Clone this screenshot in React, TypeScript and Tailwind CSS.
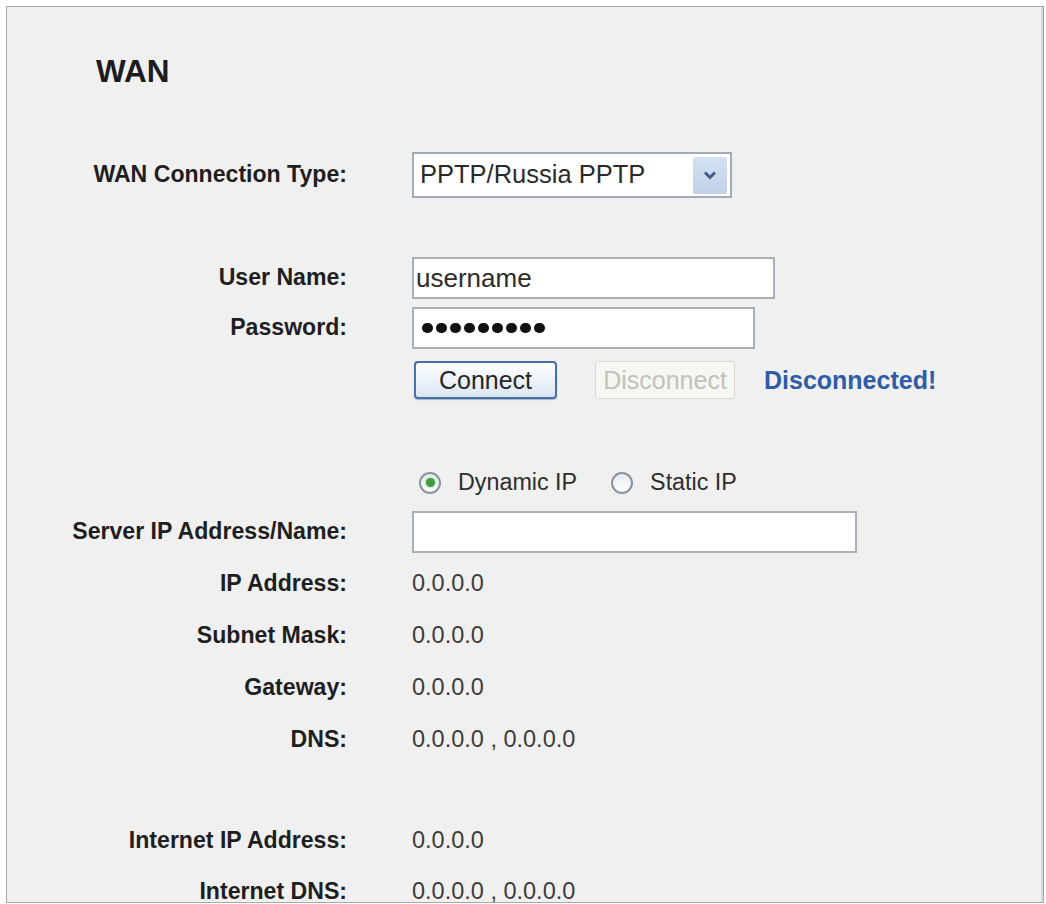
import type { ReactNode } from "react";

const font = { fontFamily: '"Liberation Sans", Arial, sans-serif' };

function Row({
  label,
  className = "",
  children,
}: {
  label?: string;
  className?: string;
  children?: ReactNode;
}) {
  return (
    <div className={`flex items-center ${className}`}>
      <div className="w-[340px] shrink-0 text-right text-[23.1px] font-bold text-[#1e1e1e] leading-none">
        {label}
      </div>
      <div className="ml-[65px] flex items-center">{children}</div>
    </div>
  );
}

function Value({ children }: { children: ReactNode }) {
  return <span className="text-[23.5px] text-[#3c3c3c] leading-none">{children}</span>;
}

function TextBox({ width, children }: { width: string; children?: ReactNode }) {
  return (
    <div
      className={`${width} h-[42px] bg-white border-2 border-[#a9afb7] flex items-center px-[2px] text-[26px] text-[#2c2c2c] leading-none`}
    >
      {children}
    </div>
  );
}

function Radio({ checked, label }: { checked?: boolean; label: string }) {
  return (
    <div className="flex items-center">
      <span className="w-[22px] h-[22px] rounded-full border-2 border-[#8893a0] bg-gradient-to-b from-[#e9ecef] to-white flex items-center justify-center">
        {checked && <span className="w-[9px] h-[9px] rounded-full bg-[#3f9c3f] shadow-[0_0_3px_#7ccf7c]" />}
      </span>
      <span className="ml-[17px] text-[23.3px] text-[#2e2e2e] leading-none">{label}</span>
    </div>
  );
}

export default function App() {
  return (
    <div className="w-[1046px] h-[904px] bg-white pt-[6px] pl-[6px]" style={font}>
      <div className="w-[1038px] h-[897px] border border-[#a8a8a8] bg-[#f0f0f0] overflow-hidden shadow-[inset_-2px_0_0_#d8d8d8]">
        {/* Heading */}
        <h1 className="mt-[47px] pl-[89px] h-[36px] flex items-center text-[31.5px] font-bold text-[#1c1c1c] leading-none">
          WAN
        </h1>

        <Row label="WAN Connection Type:" className="mt-[61px] h-[48px]">
          <div className="w-[320px] h-[46px] bg-white border-2 border-[#a3abb6] flex items-center justify-between pl-[6px] pr-[3px]">
            <span className="text-[25.5px] text-[#2a2a2a] leading-none">PPTP/Russia PPTP</span>
            <span className="w-[34px] h-[37px] rounded-[2px] bg-gradient-to-b from-[#d4e1f2] to-[#bfd1ea] flex items-center justify-center">
              <svg width="14" height="10" viewBox="0 0 14 10">
                <path d="M2 2.5 7 7.5l5-5" fill="none" stroke="#3f5885" strokeWidth="2.8" />
              </svg>
            </span>
          </div>
        </Row>

        <Row label="User Name:" className="mt-[58px] h-[42px]">
          <TextBox width="w-[363px]">username</TextBox>
        </Row>

        <Row label="Password:" className="mt-[8px] h-[42px]">
          <TextBox width="w-[343px]">
            <div className="flex gap-[3.5px] pl-[6px]">
              {Array.from({ length: 9 }).map((_, i) => (
                <span key={i} className="w-[10.5px] h-[10.5px] rounded-full bg-[#111]" />
              ))}
            </div>
          </TextBox>
        </Row>

        <Row className="mt-[12px] h-[38px]">
          <button className="ml-[2px] w-[143px] h-[38px] rounded-[4px] border-2 border-[#4a6ea6] bg-gradient-to-b from-white to-[#dbe6f3] shadow-[0_1px_1px_#9fb3cf] text-[25px] text-[#262626] leading-none">
            Connect
          </button>
          <button
            disabled
            className="ml-[38px] w-[140px] h-[38px] rounded-[3px] border border-[#d9d9cc] bg-[#f6f6f2] text-[25px] text-[#c2c2ba] leading-none"
          >
            Disconnect
          </button>
          <span className="ml-[29px] text-[25px] font-bold text-[#2e5ca6] leading-none">Disconnected!</span>
        </Row>

        <Row className="mt-[67px] h-[34px]">
          <div className="ml-[7px] flex items-center gap-[34px]">
            <Radio checked label="Dynamic IP" />
            <Radio label="Static IP" />
          </div>
        </Row>

        <Row label="Server IP Address/Name:" className="mt-[11px] h-[42px]">
          <TextBox width="w-[445px]" />
        </Row>

        <div className="mt-[5px]">
          <Row label="IP Address:" className="h-[52px]">
            <Value>0.0.0.0</Value>
          </Row>
          <Row label="Subnet Mask:" className="h-[52px]">
            <Value>0.0.0.0</Value>
          </Row>
          <Row label="Gateway:" className="h-[52px]">
            <Value>0.0.0.0</Value>
          </Row>
          <Row label="DNS:" className="h-[52px]">
            <Value>0.0.0.0 , 0.0.0.0</Value>
          </Row>
        </div>

        <div className="mt-[49px]">
          <Row label="Internet IP Address:" className="h-[52px]">
            <Value>0.0.0.0</Value>
          </Row>
          <Row label="Internet DNS:" className="h-[50px]">
            <Value>0.0.0.0 , 0.0.0.0</Value>
          </Row>
        </div>
      </div>
    </div>
  );
}
